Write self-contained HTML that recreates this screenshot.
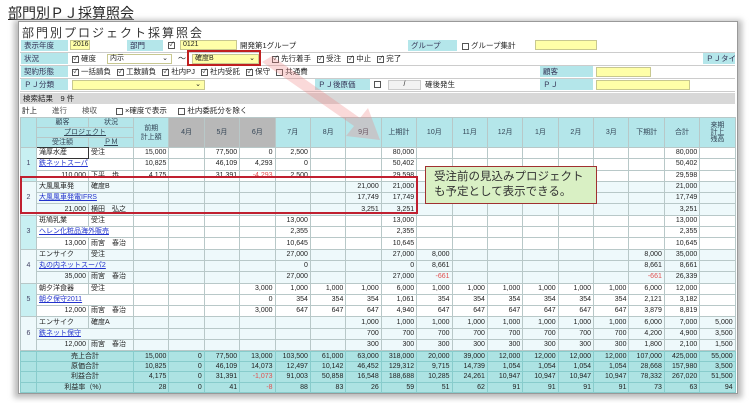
<!DOCTYPE html>
<html><head><meta charset="utf-8">
<style>
*{margin:0;padding:0;box-sizing:border-box}
body{width:750px;height:403px;background:#fff;position:relative;overflow:hidden;font-family:"Liberation Sans","Noto Sans CJK JP",sans-serif;font-size:8px;color:#222}
.a{position:absolute;white-space:nowrap}
.lab{position:absolute;background:#b4e6ea;height:11px;line-height:11px;padding-left:3px;font-size:7.5px;color:#335;white-space:nowrap;overflow:hidden}
.yel{position:absolute;background:#ffffa8;border:1px solid #c8c890;height:10px;line-height:8px;font-size:7px;padding-left:2px}
.cb{display:inline-block;width:7px;height:7px;border:1px solid #555;margin:0 2px 0 4px;vertical-align:middle;font-size:6px;line-height:5px;text-align:center}
.frow{position:absolute;left:20px;width:715px;height:13px;border-bottom:1px solid #ccc;font-size:7.5px;line-height:12px}
table{border-collapse:collapse;table-layout:fixed;position:absolute;left:20px;width:715px}
td{border:1px solid #b8c8c8;font-size:7px;text-align:right;padding:0 2px;white-space:nowrap;overflow:hidden}
#hd td{background:#b4e6ea;text-align:center;height:10px;line-height:9px;color:#345}
#hd td.g{background:#b8b8b8}
#bd td{height:11.3px;line-height:10px}
#bd tr.t td{background:#eef9fb}
#bd td.i{background:#c8f0f2;text-align:center;color:#446}
#bd td.l{text-align:left}
#bd td.k{text-align:left;color:#2233cc;text-decoration:underline}
.r{color:#e05050}
#ft td{background:#ade3e3;height:10.2px;line-height:9px;border-color:#8cc}
#ft td.c{text-align:center}
</style></head><body>
<div class="a" style="left:8px;top:3px;font-size:14px;text-decoration:underline;color:#222">部門別ＰＪ採算照会</div>
<div class="a" style="left:14px;top:20px;width:728px;height:378px;background:#bbb;filter:blur(3px)"></div>
<div class="a" style="left:18px;top:21px;width:720px;height:373px;background:#fff;border:1px solid #999"></div>
<div class="a" style="left:22px;top:24px;font-size:12px;letter-spacing:2px;color:#333">部門別プロジェクト採算照会</div>

<div class="frow" style="top:40px"></div>
<div class="lab" style="left:21px;top:40px;width:47px">表示年度</div>
<div class="yel" style="left:70px;top:40px;width:20px">2016</div>
<div class="lab" style="left:127px;top:40px;width:36px">部門</div>
<div class="a" style="left:164px;top:40px;line-height:12px"><span class="cb">✓</span></div>
<div class="yel" style="left:180px;top:40px;width:57px">0121</div>
<div class="a" style="left:240px;top:40px;line-height:12px;font-size:7.5px">開発第1グループ</div>
<div class="lab" style="left:408px;top:40px;width:49px">グループ</div>
<div class="a" style="left:458px;top:40px;line-height:12px;font-size:7.5px"><span class="cb"></span>グループ集計</div>
<div class="yel" style="left:535px;top:40px;width:62px"></div>

<div class="frow" style="top:53px"></div>
<div class="lab" style="left:21px;top:53px;width:47px">状況</div>
<div class="a" style="left:68px;top:53px;line-height:12px;font-size:7.5px"><span class="cb">✓</span>確度</div>
<div class="yel" style="left:107px;top:54px;width:65px;background:#fff">内示<span style="float:right;padding-right:3px">⌄</span></div>
<div class="a" style="left:178px;top:53px;line-height:12px">～</div>
<div class="yel" style="left:192px;top:54px;width:67px">確度B<span style="float:right;padding-right:3px">⌄</span></div>
<div class="a" style="left:187px;top:50px;width:74px;height:16px;border:2px solid #c02020"></div>
<div class="a" style="left:268px;top:53px;line-height:12px;font-size:7.5px"><span class="cb">✓</span>先行着手 <span class="cb">✓</span>受注 <span class="cb">✓</span>中止 <span class="cb">✓</span>完了</div>
<div class="lab" style="left:703px;top:53px;width:32px">ＰＪタイ</div>

<div class="frow" style="top:66px"></div>
<div class="lab" style="left:21px;top:66px;width:47px">契約形態</div>
<div class="a" style="left:68px;top:66px;line-height:12px;font-size:7.5px"><span class="cb">✓</span>一括請負 <span class="cb">✓</span>工数請負 <span class="cb">✓</span>社内PJ <span class="cb">✓</span>社内受託 <span class="cb">✓</span>保守 <span class="cb"></span>共通費</div>
<div class="lab" style="left:540px;top:66px;width:53px">顧客</div>
<div class="yel" style="left:596px;top:67px;width:55px"></div>

<div class="frow" style="top:79px"></div>
<div class="lab" style="left:21px;top:79px;width:47px">ＰＪ分類</div>
<div class="yel" style="left:72px;top:80px;width:133px">&nbsp;<span style="float:right;padding-right:3px">⌄</span></div>
<div class="lab" style="left:315px;top:79px;width:55px">ＰＪ後原価</div>
<div class="a" style="left:370px;top:79px;line-height:12px"><span class="cb"></span></div>
<div class="a" style="left:388px;top:80px;width:33px;height:10px;border:1px solid #ccc;background:#f2f2f2;font-size:7px;text-align:center;line-height:8px">/</div>
<div class="a" style="left:425px;top:79px;line-height:12px;font-size:7.5px">確後発生</div>
<div class="lab" style="left:540px;top:79px;width:53px">ＰＪ</div>
<div class="yel" style="left:596px;top:80px;width:94px"></div>

<div class="a" style="left:20px;top:93px;width:715px;height:11px;background:#d8d8d8;font-size:7.5px;line-height:11px;padding-left:3px">検索結果　9 件</div>
<div class="a" style="left:22px;top:105px;line-height:11px;font-size:7.5px">計上　　<span style="color:#555">進行　　検収</span>　　<span class="cb"></span>×確度で表示　<span class="cb"></span>社内委託分を除く</div>

<table id="hd" style="top:117px">
<colgroup><col style="width:16px"><col style="width:52px"><col style="width:45px"><col span="17" style="width:35.4px"></colgroup>
<tr><td rowspan="3"></td><td>顧客</td><td>状況</td><td rowspan="3">前期<br>計上額</td><td rowspan="3" class="g">4月</td><td rowspan="3" class="g">5月</td><td rowspan="3" class="g">6月</td><td rowspan="3">7月</td><td rowspan="3">8月</td><td rowspan="3">9月</td><td rowspan="3">上期計</td><td rowspan="3">10月</td><td rowspan="3">11月</td><td rowspan="3">12月</td><td rowspan="3">1月</td><td rowspan="3">2月</td><td rowspan="3">3月</td><td rowspan="3">下期計</td><td rowspan="3">合計</td><td rowspan="3" style="line-height:7px">来期<br>計上<br>残高</td></tr>
<tr><td colspan="2" style="text-decoration:underline">プロジェクト</td></tr>
<tr><td>受注額</td><td style="text-decoration:underline">ＰＭ</td></tr>
</table>

<div class="a" style="left:0;top:147px;width:750px;height:204px;overflow:hidden">
<table id="bd" style="top:0">
<colgroup><col style="width:16px"><col style="width:52px"><col style="width:45px"><col span="17" style="width:35.4px"></colgroup>
<tr><td class="i" rowspan="3">1</td><td class="l" style="border:1.5px solid #333">滝厚水産</td><td class="l">受注</td><td>15,000</td><td></td><td>77,500</td><td>0</td><td>2,500</td><td></td><td></td><td>80,000</td><td></td><td></td><td></td><td></td><td></td><td></td><td></td><td>80,000</td><td></td></tr>
<tr><td class="k" colspan="2">鉄ネットスーパ</td><td>10,825</td><td></td><td>46,109</td><td>4,293</td><td>0</td><td></td><td></td><td>50,402</td><td></td><td></td><td></td><td></td><td></td><td></td><td></td><td>50,402</td><td></td></tr>
<tr><td>110,000</td><td class="l">下平　歩</td><td>4,175</td><td></td><td>31,391</td><td class="r">-4,293</td><td>2,500</td><td></td><td></td><td>29,598</td><td></td><td></td><td></td><td></td><td></td><td></td><td></td><td>29,598</td><td></td></tr>
<tr class="t"><td class="i" rowspan="3">2</td><td class="l">大風風車発</td><td class="l">確度B</td><td></td><td></td><td></td><td></td><td></td><td></td><td>21,000</td><td>21,000</td><td></td><td></td><td></td><td></td><td></td><td></td><td></td><td>21,000</td><td></td></tr>
<tr class="t"><td class="k" colspan="2">大風風車発電IFRS</td><td></td><td></td><td></td><td></td><td></td><td></td><td>17,749</td><td>17,749</td><td></td><td></td><td></td><td></td><td></td><td></td><td></td><td>17,749</td><td></td></tr>
<tr class="t"><td>21,000</td><td class="l">横田　弘之</td><td></td><td></td><td></td><td></td><td></td><td></td><td>3,251</td><td>3,251</td><td></td><td></td><td></td><td></td><td></td><td></td><td></td><td>3,251</td><td></td></tr>
<tr><td class="i" rowspan="3">3</td><td class="l">斑鳩乳業</td><td class="l">受注</td><td></td><td></td><td></td><td></td><td>13,000</td><td></td><td></td><td>13,000</td><td></td><td></td><td></td><td></td><td></td><td></td><td></td><td>13,000</td><td></td></tr>
<tr><td class="k" colspan="2">ヘレン化粧品海外販売</td><td></td><td></td><td></td><td></td><td>2,355</td><td></td><td></td><td>2,355</td><td></td><td></td><td></td><td></td><td></td><td></td><td></td><td>2,355</td><td></td></tr>
<tr><td>13,000</td><td class="l">雨宮　春治</td><td></td><td></td><td></td><td></td><td>10,645</td><td></td><td></td><td>10,645</td><td></td><td></td><td></td><td></td><td></td><td></td><td></td><td>10,645</td><td></td></tr>
<tr class="t"><td class="i" rowspan="3">4</td><td class="l">エンサイク</td><td class="l">受注</td><td></td><td></td><td></td><td></td><td>27,000</td><td></td><td></td><td>27,000</td><td>8,000</td><td></td><td></td><td></td><td></td><td></td><td>8,000</td><td>35,000</td><td></td></tr>
<tr class="t"><td class="k" colspan="2">丸の内ネットスーパ2</td><td></td><td></td><td></td><td></td><td>0</td><td></td><td></td><td>0</td><td>8,661</td><td></td><td></td><td></td><td></td><td></td><td>8,661</td><td>8,661</td><td></td></tr>
<tr class="t"><td>35,000</td><td class="l">雨宮　春治</td><td></td><td></td><td></td><td></td><td>27,000</td><td></td><td></td><td>27,000</td><td class="r">-661</td><td></td><td></td><td></td><td></td><td></td><td class="r">-661</td><td>26,339</td><td></td></tr>
<tr><td class="i" rowspan="3">5</td><td class="l">朝夕洋食器</td><td class="l">受注</td><td></td><td></td><td></td><td>3,000</td><td>1,000</td><td>1,000</td><td>1,000</td><td>6,000</td><td>1,000</td><td>1,000</td><td>1,000</td><td>1,000</td><td>1,000</td><td>1,000</td><td>6,000</td><td>12,000</td><td></td></tr>
<tr><td class="k" colspan="2">朝夕保守2011</td><td></td><td></td><td></td><td>0</td><td>354</td><td>354</td><td>354</td><td>1,061</td><td>354</td><td>354</td><td>354</td><td>354</td><td>354</td><td>354</td><td>2,121</td><td>3,182</td><td></td></tr>
<tr><td>12,000</td><td class="l">雨宮　春治</td><td></td><td></td><td></td><td>3,000</td><td>647</td><td>647</td><td>647</td><td>4,940</td><td>647</td><td>647</td><td>647</td><td>647</td><td>647</td><td>647</td><td>3,879</td><td>8,819</td><td></td></tr>
<tr class="t"><td class="i" rowspan="3">6</td><td class="l">エンサイク</td><td class="l">確度A</td><td></td><td></td><td></td><td></td><td></td><td></td><td>1,000</td><td>1,000</td><td>1,000</td><td>1,000</td><td>1,000</td><td>1,000</td><td>1,000</td><td>1,000</td><td>6,000</td><td>7,000</td><td>5,000</td></tr>
<tr class="t"><td class="k" colspan="2">鉄ネット保守</td><td></td><td></td><td></td><td></td><td></td><td></td><td>700</td><td>700</td><td>700</td><td>700</td><td>700</td><td>700</td><td>700</td><td>700</td><td>4,200</td><td>4,900</td><td>3,500</td></tr>
<tr class="t"><td>12,000</td><td class="l">雨宮　春治</td><td></td><td></td><td></td><td></td><td></td><td></td><td>300</td><td>300</td><td>300</td><td>300</td><td>300</td><td>300</td><td>300</td><td>300</td><td>1,800</td><td>2,100</td><td>1,500</td></tr>
<tr><td class="i"></td><td class="l">朝夕洋食器</td><td class="l">受注</td><td></td><td></td><td></td><td></td><td></td><td></td><td>30,000</td><td>30,000</td><td></td><td></td><td>27,000</td><td></td><td></td><td></td><td>27,000</td><td>57,000</td><td></td></tr>
</table>
</div>

<table id="ft" style="top:351px">
<colgroup><col style="width:16px"><col style="width:52px"><col style="width:45px"><col span="17" style="width:35.4px"></colgroup>
<tr><td></td><td colspan="2" class="c">売上合計</td><td>15,000</td><td>0</td><td>77,500</td><td>13,000</td><td>103,500</td><td>61,000</td><td>63,000</td><td>318,000</td><td>20,000</td><td>39,000</td><td>12,000</td><td>12,000</td><td>12,000</td><td>12,000</td><td>107,000</td><td>425,000</td><td>55,000</td></tr>
<tr><td></td><td colspan="2" class="c">原価合計</td><td>10,825</td><td>0</td><td>46,109</td><td>14,073</td><td>12,497</td><td>10,142</td><td>46,452</td><td>129,312</td><td>9,715</td><td>14,739</td><td>1,054</td><td>1,054</td><td>1,054</td><td>1,054</td><td>28,668</td><td>157,980</td><td>3,500</td></tr>
<tr><td></td><td colspan="2" class="c">利益合計</td><td>4,175</td><td>0</td><td>31,391</td><td class="r">-1,073</td><td>91,003</td><td>50,858</td><td>16,548</td><td>188,688</td><td>10,285</td><td>24,261</td><td>10,947</td><td>10,947</td><td>10,947</td><td>10,947</td><td>78,332</td><td>267,020</td><td>51,500</td></tr>
<tr><td></td><td colspan="2" class="c">利益率（%）</td><td>28</td><td>0</td><td>41</td><td class="r">-8</td><td>88</td><td>83</td><td>26</td><td>59</td><td>51</td><td>62</td><td>91</td><td>91</td><td>91</td><td>91</td><td>73</td><td>63</td><td>94</td></tr>
</table>

<svg class="a" style="left:0;top:0" width="750" height="403">
<polygon points="262,62 272,56 360,118 368,108 380,140 346,136 354,126" fill="#f08080" opacity="0.3"/>
</svg>
<div class="a" style="left:20px;top:176px;width:398px;height:38px;border:2px solid #c02030"></div>
<div class="a" style="left:425px;top:166px;width:172px;height:38px;background:#d9f0c4;border:1.5px solid #a03030;font-size:11.5px;line-height:15px;padding:3px 0 0 8px;color:#333;white-space:normal">受注前の見込みプロジェクト<br>も予定として表示できる。</div>
</body></html>
